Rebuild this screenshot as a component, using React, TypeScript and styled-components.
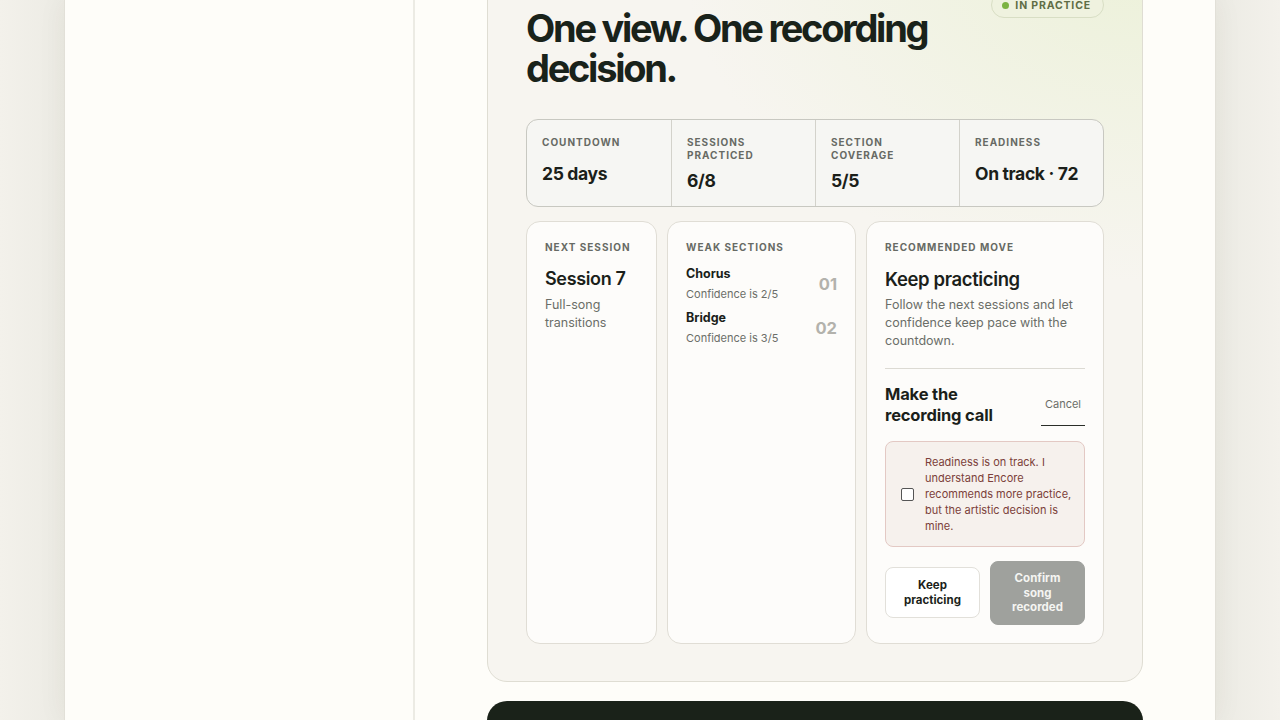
import React from "react";
import styled, { createGlobalStyle } from "styled-components";

const GlobalStyle = createGlobalStyle`
  html, body {
    margin: 0;
    padding: 0;
  }
  body {
    background: #f1efe8;
    font-family: Inter, "DejaVu Sans", sans-serif;
    color: #1b1f1a;
    overflow: hidden;
  }
  * {
    box-sizing: border-box;
  }
`;

const Page = styled.div`
  display: flex;
  justify-content: center;
  height: 100vh;
  overflow: hidden;
  background: linear-gradient(90deg, #f3f1eb 0%, #ecebe4 5%, #f3f1eb 5.01%, #f3f1eb 94.99%, #ecebe4 95%, #f3f1eb 100%);
`;

const Frame = styled.div`
  width: 1152px;
  height: 100%;
  background: #fefdf9;
  border-left: 1px solid #e2e0d8;
  border-right: 1px solid #e2e0d8;
  box-shadow: 0 0 28px rgba(60, 50, 30, 0.06);
  display: grid;
  grid-template-columns: 350px 1fr;
`;

const Sidebar = styled.aside`
  border-right: 2px solid #ecebe4;
  background: #fefdf9;
`;

const Main = styled.main`
  padding: 0 72px;
  display: flex;
  flex-direction: column;
  gap: 19px;
  margin-top: -46px;
`;

const Panel = styled.section`
  border: 1px solid #dfddd3;
  border-radius: 20px;
  padding: 37px 38px 37px 38px;
  background:
    radial-gradient(ellipse 70% 45% at 100% 0%, #ecf1d9 0%, rgba(236, 241, 217, 0) 100%),
    #f7f5f0;
`;

const Header = styled.div`
  display: flex;
  justify-content: space-between;
  align-items: flex-start;
`;

const Heading = styled.h1`
  margin: 16px 0 0;
  font-size: 38px;
  line-height: 40px;
  font-weight: 700;
  letter-spacing: -0.06em;
  color: #19221a;
  max-width: 440px;
`;

const Badge = styled.span`
  display: inline-flex;
  align-items: center;
  gap: 6px;
  height: 26px;
  padding: 0 12px 0 10px;
  border-radius: 999px;
  border: 1px solid #d8dec4;
  background: #eff2df;
  font-size: 10.5px;
  font-weight: 700;
  letter-spacing: 0.08em;
  color: #5f6d45;
`;

const Dot = styled.span`
  width: 7px;
  height: 7px;
  border-radius: 50%;
  background: #7cb342;
`;

const Stats = styled.div`
  margin-top: 31px;
  display: grid;
  grid-template-columns: repeat(4, 1fr);
  border: 1px solid #c8c8c1;
  border-radius: 12px;
  background: #f6f6f3;
  overflow: hidden;
`;

const Stat = styled.div`
  padding: 16px 15px 0;
  height: 86px;
  border-left: 1px solid #d3d2cb;
  &:first-child {
    border-left: none;
  }
`;

const Eyebrow = styled.div`
  font-size: 10px;
  line-height: 13px;
  font-weight: 700;
  letter-spacing: 0.1em;
  color: #676a64;
  text-transform: uppercase;
`;

const StatValue = styled.div<{ $gap: number }>`
  margin-top: ${(p) => p.$gap}px;
  font-size: 17.5px;
  line-height: 22px;
  font-weight: 700;
  letter-spacing: -0.02em;
  color: #1b1f1a;
`;

const Cards = styled.div`
  margin-top: 14px;
  display: grid;
  grid-template-columns: 131px 189px 1fr;
  gap: 10px;
  align-items: stretch;
`;

const Card = styled.div`
  border: 1px solid #e0ddd5;
  border-radius: 14px;
  background: #fdfcfa;
  padding: 19px 18px 18px;
  display: flex;
  flex-direction: column;
`;

const CardTitle = styled.div<{ $size: number }>`
  margin-top: 13px;
  font-size: ${(p) => p.$size}px;
  line-height: 24px;
  font-weight: 600;
  letter-spacing: -0.02em;
  color: #1b1f1a;
`;

const Body = styled.p`
  margin: 5px 0 0;
  font-size: 12.5px;
  line-height: 18px;
  color: #6b6e68;
`;

const WeakList = styled.div`
  margin-top: 12px;
  display: flex;
  flex-direction: column;
  gap: 8px;
`;

const WeakItem = styled.div`
  display: flex;
  justify-content: space-between;
  align-items: center;
`;

const WeakName = styled.div`
  font-size: 12.5px;
  line-height: 16px;
  font-weight: 700;
  color: #1b1f1a;
`;

const WeakNote = styled.div`
  margin-top: 4px;
  font-size: 11px;
  line-height: 16px;
  color: #6b6e68;
`;

const WeakIndex = styled.div`
  font-size: 16.5px;
  font-weight: 700;
  color: #b3b2ac;
`;

const Divider = styled.hr`
  margin: 18px 0 0;
  border: none;
  border-top: 1px solid #dcdad3;
`;

const CallRow = styled.div`
  margin-top: 15px;
  display: flex;
  justify-content: space-between;
  align-items: flex-start;
`;

const CallTitle = styled.div`
  font-size: 16.5px;
  line-height: 21px;
  font-weight: 700;
  letter-spacing: -0.01em;
  color: #1b1f1a;
`;

const CancelButton = styled.button`
  margin-top: 9px;
  padding: 4px 4px 14px;
  border: none;
  border-bottom: 1px solid #2a2e28;
  background: transparent;
  font-family: inherit;
  font-size: 11px;
  color: #6b6e68;
  cursor: pointer;
`;

const Consent = styled.label`
  margin-top: 15px;
  display: flex;
  align-items: center;
  gap: 11px;
  padding: 12px 12px 12px 15px;
  border: 1px solid #e3c9c4;
  border-radius: 8px;
  background: #f6f1ed;
  cursor: pointer;
`;

const Check = styled.input`
  appearance: none;
  margin: 0;
  flex: 0 0 auto;
  width: 13px;
  height: 13px;
  border: 1.5px solid #555;
  border-radius: 2px;
  background: #fff;
`;

const ConsentText = styled.span`
  font-size: 11px;
  line-height: 16px;
  color: #7c3f3a;
`;

const Actions = styled.div`
  margin-top: 14px;
  display: grid;
  grid-template-columns: 1fr 1fr;
  gap: 10px;
  align-items: center;
`;

const ActionButton = styled.button<{ $primary?: boolean }>`
  padding: ${(p) => (p.$primary ? "9px 10px" : "10px 10px")};
  border-radius: 8px;
  border: 1px solid ${(p) => (p.$primary ? "#9fa19d" : "#e2e0da")};
  background: ${(p) => (p.$primary ? "#9fa19d" : "#ffffff")};
  color: ${(p) => (p.$primary ? "#f5f5f2" : "#1b1f1a")};
  font-family: inherit;
  font-size: 11.5px;
  line-height: 14.5px;
  font-weight: 700;
  cursor: ${(p) => (p.$primary ? "not-allowed" : "pointer")};
`;

const DarkBlock = styled.div`
  height: 140px;
  border-radius: 20px;
  background: #1a2219;
`;

const stats = [
  { label: "Countdown", value: "25 days", gap: 14 },
  { label: "Sessions practiced", value: "6/8", gap: 8 },
  { label: "Section coverage", value: "5/5", gap: 8 },
  { label: "Readiness", value: "On track · 72", gap: 14 },
];

const weak = [
  { name: "Chorus", note: "Confidence is 2/5", index: "01" },
  { name: "Bridge", note: "Confidence is 3/5", index: "02" },
];

export default function App() {
  return (
    <>
      <GlobalStyle />
      <Page>
        <Frame>
          <Sidebar />
          <Main>
            <Panel>
              <Header>
                <Heading>One view. One recording decision.</Heading>
                <Badge>
                  <Dot />
                  IN PRACTICE
                </Badge>
              </Header>

              <Stats>
                {stats.map((s) => (
                  <Stat key={s.label}>
                    <Eyebrow>{s.label}</Eyebrow>
                    <StatValue $gap={s.gap}>{s.value}</StatValue>
                  </Stat>
                ))}
              </Stats>

              <Cards>
                <Card>
                  <Eyebrow>Next session</Eyebrow>
                  <CardTitle $size={18}>Session 7</CardTitle>
                  <Body>Full-song transitions</Body>
                </Card>

                <Card>
                  <Eyebrow>Weak sections</Eyebrow>
                  <WeakList>
                    {weak.map((w) => (
                      <WeakItem key={w.name}>
                        <div>
                          <WeakName>{w.name}</WeakName>
                          <WeakNote>{w.note}</WeakNote>
                        </div>
                        <WeakIndex>{w.index}</WeakIndex>
                      </WeakItem>
                    ))}
                  </WeakList>
                </Card>

                <Card>
                  <Eyebrow>Recommended move</Eyebrow>
                  <CardTitle $size={18.5}>Keep practicing</CardTitle>
                  <Body>
                    Follow the next sessions and let confidence keep pace with the
                    countdown.
                  </Body>
                  <Divider />
                  <CallRow>
                    <CallTitle>
                      Make the
                      <br />
                      recording call
                    </CallTitle>
                    <CancelButton type="button">Cancel</CancelButton>
                  </CallRow>
                  <Consent>
                    <Check type="checkbox" />
                    <ConsentText>
                      Readiness is on track. I understand Encore recommends more
                      practice, but the artistic decision is mine.
                    </ConsentText>
                  </Consent>
                  <Actions>
                    <ActionButton type="button">
                      Keep
                      <br />
                      practicing
                    </ActionButton>
                    <ActionButton type="button" $primary disabled>
                      Confirm
                      <br />
                      song
                      <br />
                      recorded
                    </ActionButton>
                  </Actions>
                </Card>
              </Cards>
            </Panel>
            <DarkBlock />
          </Main>
        </Frame>
      </Page>
    </>
  );
}
